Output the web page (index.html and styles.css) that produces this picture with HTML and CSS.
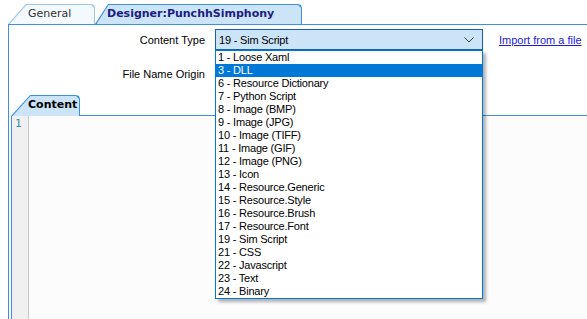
FILE: index.html
```html
<!DOCTYPE html>
<html lang="en">
<head>
    <meta charset="UTF-8">
    <title>Designer</title>
    <link rel="stylesheet" href="styles.css">
</head>
<body>

<div class="window">
    <!--顶部页签-->
    <div class="tabs">
        <div class="tab tab_general">General</div>
        <div class="tab tab_active">Designer:PunchhSimphony</div>
    </div>

    <div class="panel">
        <div class="form">
            <label class="lbl">Content Type</label>
            <div class="combo_wrap">
                <div class="combo">
                    <span>19 - Sim Script</span>
                    <svg width="10" height="6" viewBox="0 0 10 6"><polyline points="0.5,0.5 5,5 9.5,0.5" fill="none" stroke="#3a3a3a" stroke-width="1"/></svg>
                </div>
                <!--展开的下拉列表-->
                <ul class="droplist">
                    <li>1 - Loose Xaml</li>
                    <li class="sel">3 - DLL</li>
                    <li>6 - Resource Dictionary</li>
                    <li>7 - Python Script</li>
                    <li>8 - Image (BMP)</li>
                    <li>9 - Image (JPG)</li>
                    <li>10 - Image (TIFF)</li>
                    <li>11 - Image (GIF)</li>
                    <li>12 - Image (PNG)</li>
                    <li>13 - Icon</li>
                    <li>14 - Resource.Generic</li>
                    <li>15 - Resource.Style</li>
                    <li>16 - Resource.Brush</li>
                    <li>17 - Resource.Font</li>
                    <li>19 - Sim Script</li>
                    <li>21 - CSS</li>
                    <li>22 - Javascript</li>
                    <li>23 - Text</li>
                    <li>24 - Binary</li>
                </ul>
            </div>
            <a href="#" class="import">Import from a file</a>

            <label class="lbl">File Name Origin</label>
            <div class="field"></div>
        </div>

        <div class="inner">
            <div class="inner_tabs">
                <div class="tab tab_content">Content</div>
                <div class="tab_fill"></div>
            </div>
            <div class="editor">
                <div class="gutter">1</div>
                <div class="code"></div>
            </div>
        </div>
    </div>
</div>

</body>
</html>
```
FILE: styles.css
```css
*{
    margin: 0px;
    padding: 0px;
    box-sizing: border-box;
}
body{
    font-family: "Liberation Sans", Arial, sans-serif;
    font-size: 11px;
    color: #000;
    background-color: white;
    overflow: hidden;
}

.window{
    height: 319px;
    display: flex;
    flex-direction: column;
}

/*页签*/
.tabs{
    display: flex;
    height: 24px;
    padding: 4px 0 0 8px;
}
.tab{
    position: relative;
    isolation: isolate;
    height: 20px;
    line-height: 20px;
    font-family: "DejaVu Sans", Verdana, sans-serif;
    font-size: 11px;
    white-space: nowrap;
}
.tab::before,.tab::after{
    content: "";
    position: absolute;
    z-index: -1;
}
.tab::before{
    inset: 0;
    background: var(--edge);
    clip-path: polygon(0 100%, var(--slant) 0, calc(100% - 4px) 0, calc(100% - 1px) 1px, 100% 4px, 100% 100%);
}
.tab::after{
    inset: 1px 1px 0 1.5px;
    background: var(--fill);
    clip-path: polygon(0 100%, calc(var(--slant) - 1px) 0, calc(100% - 3px) 0, 100% 3px, 100% 100%);
}
.tab_general{
    --edge: #9cc6ec;
    --fill: #f4f9fe;
    --slant: 18px;
    width: 87px;
    padding-left: 20px;
    color: #333;
}
.tab_active{
    --edge: #3d8ee4;
    --fill: #cce4f7;
    --slant: 13px;
    width: 207px;
    padding-left: 12px;
    font-weight: bold;
    color: #1d1d82;
}

.panel{
    flex: 1;
    margin-left: 8px;
    border-left: 1px solid #3d8ee4;
    border-top: 1px solid #3d8ee4;
    display: flex;
    flex-direction: column;
}

/*表单区*/
.form{
    display: grid;
    grid-template-columns: 196px 268px auto;
    grid-template-rows: 21px 22px;
    column-gap: 10px;
    row-gap: 13px;
    padding-top: 4px;
}
.lbl{
    text-align: right;
    align-self: center;
}
.combo_wrap{
    position: relative;
}
.combo{
    height: 21px;
    border: 1px solid #1560aa;
    background-color: #cce4f7;
    display: flex;
    align-items: center;
    justify-content: space-between;
    padding: 0 8px 0 3px;
    letter-spacing: -0.2px;
}
.droplist{
    position: absolute;
    top: 21px;
    left: 0;
    width: 268px;
    list-style: none;
    background-color: white;
    border: 1px solid #0078d7;
    box-shadow: 3px 3px 3px rgba(0,0,0,0.3);
    letter-spacing: -0.2px;
    z-index: 5;
}
.droplist li{
    height: 13px;
    line-height: 13px;
    padding-left: 2px;
}
.droplist li.sel{
    background-color: #0078d7;
    color: white;
}
.import{
    color: #1a1ae0;
    align-self: center;
    margin-left: 6px;
}

/*内容页签*/
.inner{
    flex: 1;
    margin: 10px 0 0 2px;
    display: flex;
    flex-direction: column;
}
.inner_tabs{
    display: flex;
    height: 21px;
}
.tab_content{
    --edge: #3d8ee4;
    --fill: #cce4f7;
    --slant: 19px;
    height: 21px;
    line-height: 20px;
    width: 69px;
    padding-left: 17px;
    font-weight: bold;
}
.tab_fill{
    flex: 1;
    border-bottom: 1px solid #3d8ee4;
}
.editor{
    flex: 1;
    display: flex;
    border-left: 1px solid #3d8ee4;
}
.gutter{
    width: 17px;
    background-color: #f0f0f0;
    border-right: 1px solid #c8c8c8;
    color: #2b91af;
    font-family: "DejaVu Sans Mono", monospace;
    font-size: 11px;
    line-height: 13px;
    padding: 1px 0 0 3px;
}
.code{
    flex: 1;
    background-color: #fcfcfc;
}
```
